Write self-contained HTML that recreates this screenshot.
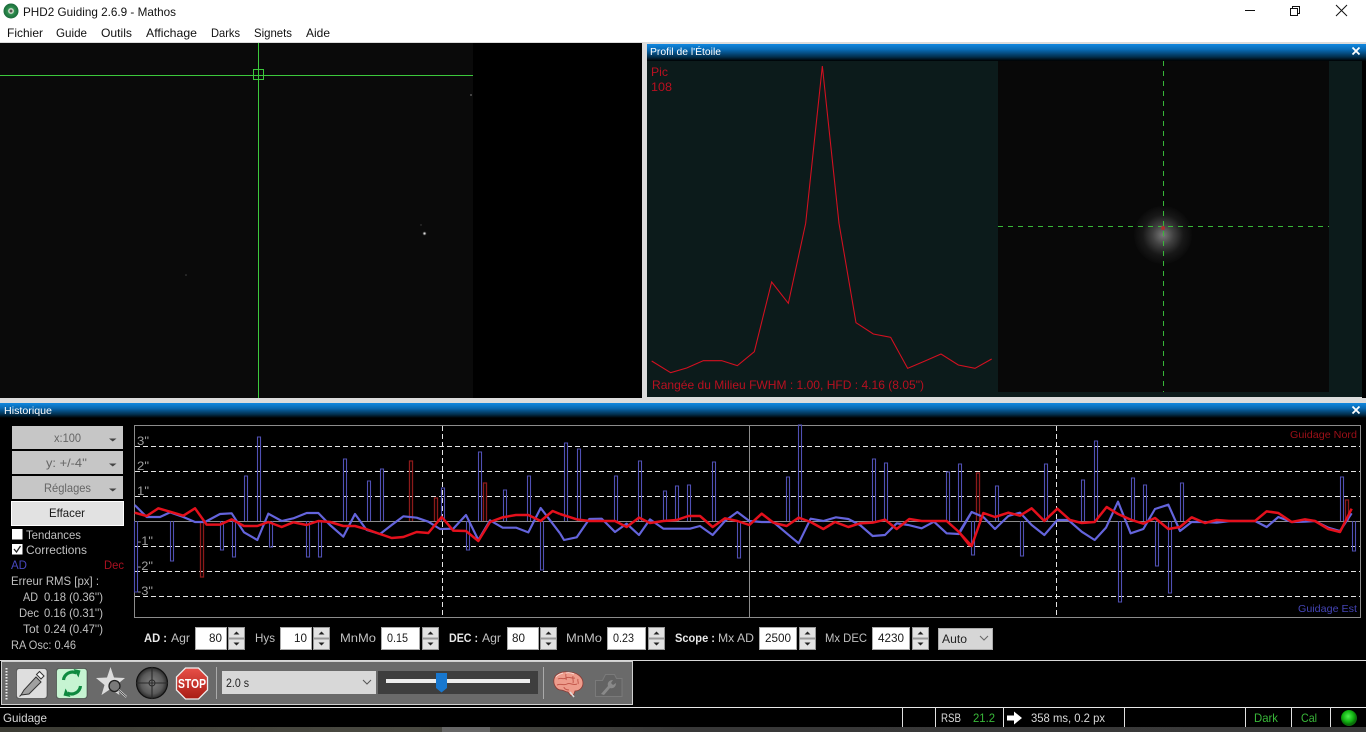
<!DOCTYPE html>
<html><head><meta charset="utf-8"><title>PHD2 Guiding</title>
<style>
html,body{margin:0;padding:0;width:1366px;height:732px;overflow:hidden;background:#000}
svg{display:block;position:absolute;left:0;top:0}
text{font-family:"Liberation Sans",sans-serif;font-size:12px}
.l{fill:#c0c0c0}.k{fill:#1a1a1a}.g{fill:#666}.r{fill:#b81020}.gr{fill:#39b839}.w{fill:#fff;font-size:10px}.st{fill:#d8d8d8}
.ax{fill:#a0a0a0;font-size:12px}
.in{fill:#fff;stroke:#aaa}
.sp{fill:#e2e2e2;stroke:#999}
</style></head><body>
<svg width="1366" height="732" viewBox="0 0 1366 732" xmlns="http://www.w3.org/2000/svg">
<defs>
<linearGradient id="tb" x1="0" y1="0" x2="0" y2="1"><stop offset="0" stop-color="#1088e0"/><stop offset=".35" stop-color="#0868b0"/><stop offset=".75" stop-color="#02304f"/><stop offset="1" stop-color="#000"/></linearGradient>
<radialGradient id="glow"><stop offset="0" stop-color="#787878"/><stop offset=".35" stop-color="#424242"/><stop offset=".7" stop-color="#181818"/><stop offset="1" stop-color="#0a0a0a"/></radialGradient>
<radialGradient id="sg"><stop offset="0" stop-color="#fff"/><stop offset=".4" stop-color="#999"/><stop offset="1" stop-color="#0a0a0a" stop-opacity="0"/></radialGradient>
<radialGradient id="cross"><stop offset="0" stop-color="#808080"/><stop offset=".7" stop-color="#5a5a5a"/><stop offset="1" stop-color="#2a2a2a"/></radialGradient>
<linearGradient id="stop" x1="0" y1="0" x2="0" y2="1"><stop offset="0" stop-color="#e85048"/><stop offset="1" stop-color="#a81c14"/></linearGradient>
<radialGradient id="led" cx=".45" cy=".4"><stop offset="0" stop-color="#50f050"/><stop offset=".7" stop-color="#10b010"/><stop offset="1" stop-color="#0a700a"/></radialGradient>
<radialGradient id="ico"><stop offset="0" stop-color="#111"/><stop offset=".3" stop-color="#dfe8d8"/><stop offset=".45" stop-color="#2f8f4f"/><stop offset="1" stop-color="#1a6a3a"/></radialGradient>
<linearGradient id="desk" x1="0" y1="0" x2="1" y2="0"><stop offset="0" stop-color="#3c3c34"/><stop offset=".3" stop-color="#4a4a42"/><stop offset=".5" stop-color="#383838"/><stop offset="1" stop-color="#3a3a3a"/></linearGradient>
</defs>

<!-- window chrome -->
<rect width="1366" height="43" fill="#fff"/>
<circle cx="11" cy="11" r="7.5" fill="url(#ico)"/>
<text x="23" y="16" fill="#111" textLength="153" lengthAdjust="spacingAndGlyphs">PHD2 Guiding 2.6.9 - Mathos</text>
<text x="7" y="37" fill="#111" textLength="36" lengthAdjust="spacingAndGlyphs">Fichier</text>
<text x="56" y="37" fill="#111" textLength="31" lengthAdjust="spacingAndGlyphs">Guide</text>
<text x="101" y="37" fill="#111" textLength="31" lengthAdjust="spacingAndGlyphs">Outils</text>
<text x="146" y="37" fill="#111" textLength="51" lengthAdjust="spacingAndGlyphs">Affichage</text>
<text x="211" y="37" fill="#111" textLength="29" lengthAdjust="spacingAndGlyphs">Darks</text>
<text x="254" y="37" fill="#111" textLength="38" lengthAdjust="spacingAndGlyphs">Signets</text>
<text x="306" y="37" fill="#111" textLength="24" lengthAdjust="spacingAndGlyphs">Aide</text>
<path d="M1245 10.5h10" stroke="#111" fill="none"/>
<path d="M1290.5 8.5h7v7h-7zM1292.5 8.5v-2h7v7h-2" stroke="#111" fill="none"/>
<path d="M1336 5l11 11M1347 5l-11 11" stroke="#111" fill="none"/>

<!-- panel frame -->
<rect y="42" width="1366" height="362" fill="#dcdcdc"/>
<rect y="43" width="642" height="355" fill="#000"/>
<rect y="43" width="473" height="355" fill="#0a0a0a"/>
<circle cx="424.5" cy="233.500" r="2.400" fill="url(#sg)"/>
<circle cx="471" cy="95" r="1" fill="#555"/>
<circle cx="186" cy="275" r=".8" fill="#444"/>
<circle cx="421" cy="225" r=".7" fill="#444"/>
<path d="M0 75.5h473M258.5 43v355" stroke="#3cc83c" fill="none"/>
<rect x="253.500" y="69.500" width="10" height="10" fill="none" stroke="#3cc83c"/>

<!-- star profile -->
<rect x="647" y="44" width="719" height="17" fill="url(#tb)"/>
<text class="w" x="650" y="55" textLength="71" lengthAdjust="spacingAndGlyphs">Profil de l'Étoile</text>
<path d="M1352.500 47.500l7 7M1359.500 47.500l-7 7" stroke="#fff" stroke-width="1.800" fill="none"/>
<rect x="647" y="61" width="715" height="336" fill="#0c1b1b"/>
<rect x="1362" y="61" width="4" height="337" fill="#000"/>
<rect x="998" y="61" width="331" height="331" fill="#080808"/>
<circle cx="1163" cy="235" r="29" fill="url(#glow)"/>
<path d="M998 226.500h331M1163.500 61v331" stroke="#38b838" stroke-dasharray="5 5" fill="none"/>
<circle cx="1163" cy="228" r="2" fill="#a83030"/>
<text class="r" x="651" y="76" textLength="17" lengthAdjust="spacingAndGlyphs">Pic</text>
<text class="r" x="651" y="91" textLength="21" lengthAdjust="spacingAndGlyphs">108</text>
<text class="r" x="652" y="389" textLength="272" lengthAdjust="spacingAndGlyphs">Rangée du Milieu FWHM : 1.00, HFD : 4.16 (8.05")</text>
<g transform="translate(640 40) scale(.33333)"><polyline fill="none" stroke="#d41020" stroke-width="3.200" points="35,963 92,998 140,984 190,962 245,962 292,977 343,935 395,726 445,790 497,550 547,78 597,550 648,848 700,882 752,892 803,985 855,963 903,942 955,975 1005,985 1055,957"/></g>

<!-- history -->
<rect y="403" width="1366" height="15" fill="url(#tb)"/>
<rect y="418" width="1366" height="242" fill="#000"/>
<text class="w" x="4" y="414" textLength="48" lengthAdjust="spacingAndGlyphs">Historique</text>
<path d="M1352.500 406.500l7 7M1359.500 406.500l-7 7" stroke="#fff" stroke-width="1.800" fill="none"/>

<rect x="12" y="426" width="111" height="23" fill="#c6c6c6"/>
<rect x="12" y="451" width="111" height="23" fill="#c6c6c6"/>
<rect x="12" y="476" width="111" height="23" fill="#c6c6c6"/>
<rect x="11.500" y="501.500" width="112" height="24" fill="#e2e2e2" stroke="#fff"/>
<text class="g" x="54" y="442" textLength="27" lengthAdjust="spacingAndGlyphs">x:100</text>
<text class="g" x="46" y="467" textLength="41" lengthAdjust="spacingAndGlyphs">y: +/-4''</text>
<text class="g" x="44" y="492" textLength="47" lengthAdjust="spacingAndGlyphs">Réglages</text>
<text class="k" x="49" y="517" textLength="36" lengthAdjust="spacingAndGlyphs">Effacer</text>
<path d="M109 438.500h7.500l-3.750 3zM109 463.500h7.500l-3.750 3zM109 488.500h7.500l-3.750 3z" fill="#444"/>
<rect x="12" y="529" width="10.500" height="10.500" fill="#fff"/>
<rect x="12" y="544" width="10.500" height="10.500" fill="#fff"/>
<path d="M14 549l2.500 3 4-6" stroke="#222" stroke-width="1.300" fill="none"/>
<text class="l" x="26" y="539" textLength="55" lengthAdjust="spacingAndGlyphs">Tendances</text>
<text class="l" x="26" y="554" textLength="61" lengthAdjust="spacingAndGlyphs">Corrections</text>
<text x="11" y="569" fill="#4848c0" textLength="16" lengthAdjust="spacingAndGlyphs">AD</text>
<text x="104" y="569" fill="#a81020" textLength="20" lengthAdjust="spacingAndGlyphs">Dec</text>
<text class="l" x="11" y="585" textLength="88" lengthAdjust="spacingAndGlyphs">Erreur RMS [px] :</text>
<text class="l" x="23" y="601" textLength="15" lengthAdjust="spacingAndGlyphs">AD</text>
<text class="l" x="44" y="601" textLength="59" lengthAdjust="spacingAndGlyphs">0.18 (0.36'')</text>
<text class="l" x="19" y="617" textLength="20" lengthAdjust="spacingAndGlyphs">Dec</text>
<text class="l" x="44" y="617" textLength="59" lengthAdjust="spacingAndGlyphs">0.16 (0.31'')</text>
<text class="l" x="23" y="633" textLength="16" lengthAdjust="spacingAndGlyphs">Tot</text>
<text class="l" x="44" y="633" textLength="59" lengthAdjust="spacingAndGlyphs">0.24 (0.47'')</text>
<text class="l" x="11" y="649" textLength="65" lengthAdjust="spacingAndGlyphs">RA Osc: 0.46</text>

<!-- graph -->
<rect x="134.500" y="425.500" width="1226" height="192" fill="none" stroke="#8c8c8c"/>
<path d="M135 446.500h1225M135 471.500h1225M135 496.500h1225M135 546.500h1225M135 571.500h1225M135 596.500h1225M442.500 426v191M1056.500 426v191" stroke="#e4e4e4" stroke-dasharray="5 3" fill="none"/>
<path d="M135 521.500h1225M749.500 426v191" stroke="#8c8c8c" fill="none"/>
<text class="ax" x="137" y="445" textLength="12" lengthAdjust="spacingAndGlyphs">3"</text>
<text class="ax" x="137" y="470" textLength="12" lengthAdjust="spacingAndGlyphs">2"</text>
<text class="ax" x="137" y="495" textLength="12" lengthAdjust="spacingAndGlyphs">1"</text>
<text class="ax" x="137" y="545" textLength="16" lengthAdjust="spacingAndGlyphs">-1"</text>
<text class="ax" x="137" y="570" textLength="16" lengthAdjust="spacingAndGlyphs">-2"</text>
<text class="ax" x="137" y="595" textLength="16" lengthAdjust="spacingAndGlyphs">-3"</text>
<text x="1290" y="438" fill="#9c1018" style="font-size:10.500px" textLength="67" lengthAdjust="spacingAndGlyphs">Guidage Nord</text>
<text x="1298" y="612" fill="#4444b4" style="font-size:10.500px" textLength="59" lengthAdjust="spacingAndGlyphs">Guidage Est</text>

<path fill="none" stroke="#5050b4" stroke-width="1.100" d="M134.500 521V592h3V521M170.500 521V561h3V521M220.500 521V550h3V521M232.500 521V557h3V521M244.500 521V476h3V521M257.500 521V437h3V521M269.500 521V547h3V521M306.500 521V557h3V521M318.500 521V557h3V521M343.500 521V459h3V521M367.500 521V481h3V521M380.500 521V469h3V521M441.500 521V488h3V521M466.500 521V550h3V521M478.500 521V452h3V521M503.500 521V490h3V521M527.500 521V476h3V521M540.500 521V570h3V521M564.500 521V443h3V521M577.500 521V449h3V521M614.500 521V476h3V521M638.500 521V461h3V521M663.500 521V491h3V521M675.500 521V486h3V521M687.500 521V485h3V521M712.500 521V462h3V521M737.500 521V558h3V521M786.500 521V477h3V521M798.500 521V425h3V521M872.500 521V459h3V521M884.500 521V463h3V521M946.500 521V472h3V521M958.500 521V464h3V521M971.500 521V555h3V521M995.500 521V486h3V521M1020.500 521V556h3V521M1044.500 521V464h3V521M1081.500 521V480h3V521M1094.500 521V441h3V521M1118.500 521V602h3V521M1131.500 521V478h3V521M1143.500 521V485h3V521M1155.500 521V566h3V521M1168.500 521V593h3V521M1180.500 521V483h3V521M1340.500 521V477h3V521M1352.500 521V551h3V521"/>
<path fill="none" stroke="#8c1a1a" stroke-width="1.300" d="M200.500 521V577h3V521M409.500 521V461h3V521M434.500 521V498h3V521M483.500 521V483h3V521M976.500 521V473h3V521M1345.500 521V500h3V521"/>

<g transform="translate(130 420) scale(.33333)" fill="none" stroke-linejoin="round">
<polyline stroke="#6464dc" stroke-width="6.500" points="14,255 50,291 90,291 120,277 160,291 195,306 225,306 270,282 305,280 342,337 382,360 415,281 455,303 490,295 530,279 565,279 600,315 640,350 675,282 710,330 750,342 785,315 820,289 860,293 895,305 930,327 970,326 1008,285 1045,360 1080,301 1118,323 1158,323 1195,337 1232,264 1290,340"/>
</g>
<g transform="translate(560 420) scale(.33333)" fill="none" stroke-linejoin="round">
<polyline stroke="#6464dc" stroke-width="6.500" points="0,340 12,360 50,352 88,297 125,296 165,336 200,311 237,345 270,298 310,326 350,326 390,326 420,318 458,345 495,303 532,276 568,303 605,306 640,306 680,340 716,370 752,296 790,303 828,292 865,297 900,315 938,348 975,345 1010,310 1045,315 1085,325 1122,305 1160,340 1197,342 1230,285"/>
</g>
<g transform="translate(960 420) scale(.33333)" fill="none" stroke-linejoin="round">
<polyline stroke="#6464dc" stroke-width="6.500" points="0,333 35,276 70,291 105,327 145,288 180,278 215,315 253,345 292,300 325,300 365,335 404,360 438,323 474,245 512,340 550,327 585,267 625,254 660,333 695,306 735,306 770,308 810,303 885,303 920,321 955,291 995,306 1035,305 1065,303 1105,323 1140,333 1175,280"/>
</g>
<g transform="translate(130 420) scale(.33333)" fill="none" stroke-linejoin="round">
<polyline stroke="#e4101c" stroke-width="7.500" points="14,278 50,288 85,265 120,275 160,287 195,265 230,314 270,314 305,298 342,318 382,318 415,306 455,321 490,307 530,315 565,303 600,306 640,318 675,318 710,328 750,342 785,354 820,351 860,336 895,339 935,291 970,332 1008,333 1045,363 1080,306 1118,292 1158,285 1195,285 1232,303 1268,273 1290,282"/>
</g>
<g transform="translate(560 420) scale(.33333)" fill="none" stroke-linejoin="round">
<polyline stroke="#e4101c" stroke-width="7.500" points="0,282 50,298 88,303 125,303 165,303 200,321 237,293 270,309 310,303 350,300 385,288 420,288 458,321 495,295 532,303 568,315 605,281 640,308 680,318 716,293 752,306 790,327 825,306 865,321 900,310 938,308 975,299 1010,327 1048,297 1085,303 1122,303 1160,303 1197,336 1230,378"/>
</g>
<g transform="translate(960 420) scale(.33333)" fill="none" stroke-linejoin="round">
<polyline stroke="#e4101c" stroke-width="7.500" points="0,340 35,378 70,279 105,291 145,278 180,287 215,265 253,303 292,266 330,300 365,309 404,306 440,261 474,282 512,299 550,311 585,294 625,327 660,321 695,292 735,309 770,300 810,303 885,303 920,274 955,279 995,306 1035,298 1065,303 1105,327 1140,336 1175,266"/>
</g>

<!-- controls row -->
<text x="144" y="642" fill="#e8e8e8" style="font-weight:bold" textLength="23" lengthAdjust="spacingAndGlyphs">AD :</text>
<text class="l" x="171" y="642" textLength="19" lengthAdjust="spacingAndGlyphs">Agr</text>
<rect class="in" x="195.500" y="627.500" width="31" height="22"/>
<text class="k" x="209" y="642" textLength="13" lengthAdjust="spacingAndGlyphs">80</text>
<text class="l" x="255" y="642" textLength="20" lengthAdjust="spacingAndGlyphs">Hys</text>
<rect class="in" x="280.500" y="627.500" width="31" height="22"/>
<text class="k" x="294" y="642" textLength="13" lengthAdjust="spacingAndGlyphs">10</text>
<text class="l" x="340" y="642" textLength="36" lengthAdjust="spacingAndGlyphs">MnMo</text>
<rect class="in" x="381.500" y="627.500" width="38" height="22"/>
<text class="k" x="387" y="642" textLength="21" lengthAdjust="spacingAndGlyphs">0.15</text>
<text x="449" y="642" fill="#e8e8e8" style="font-weight:bold" textLength="29" lengthAdjust="spacingAndGlyphs">DEC :</text>
<text class="l" x="482" y="642" textLength="19" lengthAdjust="spacingAndGlyphs">Agr</text>
<rect class="in" x="507.500" y="627.500" width="31" height="22"/>
<text class="k" x="512" y="642" textLength="13" lengthAdjust="spacingAndGlyphs">80</text>
<text class="l" x="566" y="642" textLength="36" lengthAdjust="spacingAndGlyphs">MnMo</text>
<rect class="in" x="607.500" y="627.500" width="38" height="22"/>
<text class="k" x="613" y="642" textLength="21" lengthAdjust="spacingAndGlyphs">0.23</text>
<text x="675" y="642" fill="#e8e8e8" style="font-weight:bold" textLength="40" lengthAdjust="spacingAndGlyphs">Scope :</text>
<text class="l" x="718" y="642" textLength="36" lengthAdjust="spacingAndGlyphs">Mx AD</text>
<rect class="in" x="759.500" y="627.500" width="37" height="22"/>
<text class="k" x="765" y="642" textLength="26" lengthAdjust="spacingAndGlyphs">2500</text>
<text class="l" x="825" y="642" textLength="42" lengthAdjust="spacingAndGlyphs">Mx DEC</text>
<rect class="in" x="872.500" y="627.500" width="37" height="22"/>
<text class="k" x="878" y="642" textLength="26" lengthAdjust="spacingAndGlyphs">4230</text>
<!-- spinners -->
<g>
<rect class="sp" x="228.500" y="627.500" width="16" height="10.500"/><rect class="sp" x="228.500" y="639" width="16" height="10.500"/>
<rect class="sp" x="313.500" y="627.500" width="16" height="10.500"/><rect class="sp" x="313.500" y="639" width="16" height="10.500"/>
<rect class="sp" x="422.500" y="627.500" width="16" height="10.500"/><rect class="sp" x="422.500" y="639" width="16" height="10.500"/>
<rect class="sp" x="540.500" y="627.500" width="16" height="10.500"/><rect class="sp" x="540.500" y="639" width="16" height="10.500"/>
<rect class="sp" x="648.500" y="627.500" width="16" height="10.500"/><rect class="sp" x="648.500" y="639" width="16" height="10.500"/>
<rect class="sp" x="799.500" y="627.500" width="16" height="10.500"/><rect class="sp" x="799.500" y="639" width="16" height="10.500"/>
<rect class="sp" x="912.500" y="627.500" width="16" height="10.500"/><rect class="sp" x="912.500" y="639" width="16" height="10.500"/>
<path fill="#222" d="M233.500 634.500l3-3 3 3zM233.500 642.500l3 3 3-3zM318.500 634.500l3-3 3 3zM318.500 642.500l3 3 3-3zM427.500 634.500l3-3 3 3zM427.500 642.500l3 3 3-3zM545.500 634.500l3-3 3 3zM545.500 642.500l3 3 3-3zM653.500 634.500l3-3 3 3zM653.500 642.500l3 3 3-3zM804.500 634.500l3-3 3 3zM804.500 642.500l3 3 3-3zM917.500 634.500l3-3 3 3zM917.500 642.500l3 3 3-3z"/>
</g>
<rect x="938.500" y="628.500" width="54" height="21" fill="#d6d6d6" stroke="#aaa"/>
<text x="942" y="643" fill="#222" textLength="25" lengthAdjust="spacingAndGlyphs">Auto</text>
<path d="M980 636l4 4 4-4" stroke="#666" fill="none"/>

<rect y="660" width="1366" height="1" fill="#d8d8d8"/>

<!-- toolbar -->
<rect x="1.500" y="661.500" width="631" height="43" fill="#6a6a6a" stroke="#d0d0d0"/>
<path d="M6.500 668v32" stroke="#eee" stroke-width="2" stroke-dasharray="1.500 1.500" fill="none"/>
<rect x="16.500" y="668.500" width="30.500" height="30" rx="3" fill="#dedede" stroke="#222" stroke-opacity=".5"/>
<path d="M21 695l3-5 12-13 5 5-12 12z" fill="#a0a0a0" stroke="#333" stroke-width="1"/>
<path d="M21 695l-1.500 1.500" stroke="#333"/>
<path d="M36.500 674.500l3-3 4.500 4.500-3 3z" fill="#f4f4f4" stroke="#333"/>
<rect x="56.500" y="668.500" width="30.500" height="30" rx="3" fill="#c6f4d2" stroke="#222" stroke-opacity=".5"/>
<path d="M63.500 680a9 9 0 0 1 13-7" fill="none" stroke="#0e8a40" stroke-width="3.200"/>
<path d="M80.500 686a9 9 0 0 1-13 7" fill="none" stroke="#0e8a40" stroke-width="3.200"/>
<path d="M73.500 669l7 1.500-2 7zM70.500 697l-7-1.500 2-7z" fill="#0e8a40"/>
<path d="M110.500 667l3.500 10.500 11 .5-8.500 7 3 10-9-6-9 6 3-10-8.500-7 11-.5z" fill="#dcdcdc"/>
<circle cx="114.500" cy="686" r="5.500" fill="#7a7a7a" stroke="#222" stroke-width="1.300"/>
<path d="M118.500 690l8 7" stroke="#eee" stroke-width="2"/>
<path d="M118.500 690l8 7" stroke="#222" stroke-width=".8"/>
<circle cx="152" cy="683" r="15.500" fill="url(#cross)" stroke="#111" stroke-width="1.200"/>
<path d="M136 683h32M152 667v32" stroke="#2a2a2a" stroke-width="1.100"/>
<circle cx="152" cy="683" r="3" fill="none" stroke="#2a2a2a"/>
<path d="M185.500 668h13l9 9v13l-9 9h-13l-9-9v-13z" fill="url(#stop)" stroke="#eee" stroke-width="1.300"/>
<text x="178" y="688" fill="#fff" style="font-size:12.500px;font-weight:bold" textLength="28" lengthAdjust="spacingAndGlyphs">STOP</text>
<path d="M216.500 667v32M543.500 667v32" stroke="#aaa"/>
<rect x="222" y="671" width="154" height="23" fill="#d8d8d8"/>
<text x="226" y="687" fill="#222" textLength="23" lengthAdjust="spacingAndGlyphs">2.0 s</text>
<path d="M363 680l4 4 4-4" stroke="#555" fill="none"/>
<rect x="378" y="671" width="160" height="23" fill="#3e3e3e"/>
<rect x="386" y="679" width="144" height="4" fill="#ececec"/>
<path d="M436 673h11v15l-5.500 4.500-5.500-4.500z" fill="#1878d0"/>
<path d="M554 679c1-5 8-8 14-7 9 0 15 5 15 11 0 5-4 8-8 8l-1 3-3 2-3-4c-3 0-4-2-7-2-5 0-8-6-7-11z" fill="#ee9c8c" stroke="#8a3a34" stroke-width=".8"/>
<path d="M558 679c3-2 5 1 8-1s6 1 9 0M557 685c4-2 7 1 10-1s6 2 10 0M566 674c-1 2 1 4 0 6M573 676c-1 3 1 4 0 7M564 687c0 2 3 3 5 3M578 679c-1 2 1 3 0 5" fill="none" stroke="#c4584c"/>
<path d="M556 677c2-3 5-3 7-4M566 673c3-1 6 0 8 1" fill="none" stroke="#fbd8d0"/>
<path d="M570 692l4 5" stroke="#ddd" stroke-width="1.500"/>
<path d="M595.500 680.500h7l3-6h9l2 4h5.500v18h-26.500z" fill="#636363" stroke="#7a7a7a"/>
<path d="M601 694l7-8c-1-3 1-6 5-6l-2 3 2 2 3-2c0 4-3 6-6 5l-6 7z" fill="#8a8a8a"/>

<!-- status -->
<rect y="707" width="1366" height="1" fill="#e8e8e8"/>
<text class="st" x="3" y="722" textLength="44" lengthAdjust="spacingAndGlyphs">Guidage</text>
<path d="M902.500 707v20M935.500 707v20M1003.500 707v20M1124.500 707v20M1245.500 707v20M1291.500 707v20M1330.500 707v20" stroke="#e0e0e0"/>
<text class="st" x="941" y="722" textLength="20" lengthAdjust="spacingAndGlyphs">RSB</text>
<text class="gr" x="973" y="722" textLength="22" lengthAdjust="spacingAndGlyphs">21.2</text>
<path d="M1007 715.500h7v-4l8 6.500-8 6.500v-4h-7z" fill="#fff"/>
<text class="st" x="1031" y="722" textLength="74" lengthAdjust="spacingAndGlyphs">358 ms, 0.2 px</text>
<text class="gr" x="1254" y="722" textLength="24" lengthAdjust="spacingAndGlyphs">Dark</text>
<text class="gr" x="1301" y="722" textLength="16" lengthAdjust="spacingAndGlyphs">Cal</text>
<circle cx="1349" cy="718" r="8" fill="url(#led)"/>

<rect y="727" width="1366" height="5" fill="url(#desk)"/>
<rect x="442" y="727" width="48" height="5" fill="#666"/>
</svg>
</body></html>
